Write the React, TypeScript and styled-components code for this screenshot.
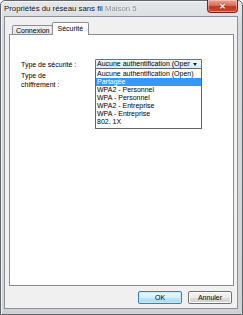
import React from "react";
import styled, { createGlobalStyle } from "styled-components";

const GlobalStyle = createGlobalStyle`
  html, body {
    margin: 0;
    padding: 0;
    background: #ffffff;
  }
  body {
    font-family: "Liberation Sans", Arial, sans-serif;
    font-size: 7px;
    color: #000000;
  }
`;

const Window = styled.div`
  width: 243px;
  height: 315px;
  box-sizing: border-box;
  display: flex;
  flex-direction: column;
  padding: 0 4px 5px 3px;
  border: 1px solid #5f646b;
  border-radius: 5px 5px 0 0;
  background: linear-gradient(180deg, #e4e7ea 0%, #d6dade 8%, #cfd3d8 100%);
  box-shadow: inset 1px 1px 0 #f4f6f8;
`;

const TitleBar = styled.div`
  height: 15px;
  flex-shrink: 0;
  display: flex;
  justify-content: space-between;
  align-items: flex-start;
`;

const Title = styled.div`
  padding: 3px 0 0 0;
  font-size: 7.8px;
  color: #111111;
  white-space: nowrap;
  text-shadow: 0 0 3px #ffffff;
`;

const Blurred = styled.span`
  color: #8a8a8a;
  filter: blur(0.7px);
`;

const CloseButton = styled.div`
  width: 31px;
  height: 13px;
  margin-top: -1px;
  box-sizing: border-box;
  border: 1px solid #7a2416;
  border-top: none;
  border-radius: 0 0 4px 4px;
  background: linear-gradient(180deg, #e9a697 0%, #d7705d 45%, #c0391f 55%, #c94a2c 100%);
  box-shadow: inset 0 0 0 1px rgba(255, 210, 200, 0.5);
  color: #ffffff;
  font-family: "DejaVu Sans", sans-serif;
  font-size: 9px;
  font-weight: bold;
  line-height: 12px;
  text-align: center;
  text-shadow: 0 0 2px #6a1a0c;
`;

const Client = styled.div`
  flex: 1;
  display: flex;
  flex-direction: column;
  padding: 5px 3px 4px 4px;
  border: 1px solid #8b9199;
  background: #f0f0f0;
`;

const TabRow = styled.div`
  display: flex;
  align-items: flex-end;
  padding-left: 3px;
  margin-bottom: -1px;
  position: relative;
  z-index: 1;
`;

const Tab = styled.div<{ $active?: boolean }>`
  box-sizing: border-box;
  height: ${(p) => (p.$active ? "13px" : "10px")};
  padding: ${(p) => (p.$active ? "2px 5px 0 4px" : "1px 3px 0 3px")};
  margin-left: ${(p) => (p.$active ? "-1px" : "0")};
  border: 1px solid #898c95;
  border-bottom: ${(p) => (p.$active ? "none" : "1px solid #898c95")};
  border-radius: 2px 2px 0 0;
  background: ${(p) =>
    p.$active ? "#ffffff" : "linear-gradient(180deg, #f2f2f2 0%, #e3e3e3 100%)"};
  color: #000000;
  white-space: nowrap;
`;

const Panel = styled.div`
  flex: 1;
  position: relative;
  border: 1px solid #898c95;
  background: #ffffff;
  padding: 24px 0 0 11px;
`;

const Form = styled.div`
  display: grid;
  grid-template-columns: 74px 107px;
  row-gap: 1px;
  align-items: start;
`;

const Label = styled.div<{ $wrap?: boolean }>`
  line-height: 9px;
  padding-top: 0.5px;
  max-width: ${(p) => (p.$wrap ? "44px" : "none")};
  white-space: ${(p) => (p.$wrap ? "normal" : "nowrap")};
`;

const SelectWrap = styled.div`
  position: relative;
`;

const Select = styled.div`
  box-sizing: border-box;
  height: 10px;
  border: 1px solid #3c7fb1;
  border-radius: 1px;
  background: linear-gradient(180deg, #eef8fd 0%, #e2f3fc 50%, #d3edfb 100%);
  display: flex;
  align-items: center;
  padding-left: 1px;
  overflow: hidden;
  white-space: nowrap;
  line-height: 8px;
`;

const SelectText = styled.span`
  flex: 1;
  overflow: hidden;
`;

const Arrow = styled.span`
  width: 0;
  height: 0;
  margin: 0 4px 0 3px;
  border-left: 2.5px solid transparent;
  border-right: 2.5px solid transparent;
  border-top: 3px solid #1a1a1a;
`;

const List = styled.div`
  position: absolute;
  left: 0;
  top: 9px;
  width: 107px;
  box-sizing: border-box;
  border: 1px solid #646464;
  background: #ffffff;
  padding: 1px 0 2px 0;
  z-index: 2;
`;

const Option = styled.div<{ $selected?: boolean }>`
  height: 8px;
  line-height: 8px;
  padding-left: 1px;
  white-space: nowrap;
  background: ${(p) => (p.$selected ? "#3399ff" : "transparent")};
  color: ${(p) => (p.$selected ? "#ffffff" : "#000000")};
`;

const ButtonRow = styled.div`
  display: flex;
  justify-content: flex-end;
  gap: 6px;
  padding: 5px 2px 0 0;
`;

const Button = styled.div<{ $default?: boolean }>`
  box-sizing: border-box;
  width: 44px;
  height: 13px;
  border: 1px solid ${(p) => (p.$default ? "#3c7fb1" : "#707070")};
  border-radius: 2px;
  background: ${(p) =>
    p.$default
      ? "linear-gradient(180deg, #eaf6fd 0%, #d9f0fc 50%, #bee6fd 51%, #a7d9f5 100%)"
      : "linear-gradient(180deg, #f2f2f2 0%, #ebebeb 50%, #dddddd 51%, #cfcfcf 100%)"};
  box-shadow: inset 0 0 0 1px ${(p) => (p.$default ? "#c6eafd" : "#fcfcfc")};
  text-align: center;
  line-height: 11px;
`;

const options = [
  "Aucune authentification (Open)",
  "Partagée",
  "WPA2 - Personnel",
  "WPA - Personnel",
  "WPA2 - Entreprise",
  "WPA - Entreprise",
  "802. 1X",
];

export default function App() {
  return (
    <>
      <GlobalStyle />
      <Window>
        <TitleBar>
          <Title>
            Propriétés du réseau sans fil <Blurred>Maison 5</Blurred>
          </Title>
          <CloseButton>×</CloseButton>
        </TitleBar>
        <Client>
          <TabRow>
            <Tab>Connexion</Tab>
            <Tab $active>Sécurité</Tab>
          </TabRow>
          <Panel>
            <Form>
              <Label>Type de sécurité :</Label>
              <SelectWrap>
                <Select>
                  <SelectText>Aucune authentification (Open)</SelectText>
                  <Arrow />
                </Select>
                <List>
                  {options.map((o) => (
                    <Option key={o} $selected={o === "Partagée"}>
                      {o}
                    </Option>
                  ))}
                </List>
              </SelectWrap>
              <Label $wrap>Type de chiffrement :</Label>
            </Form>
          </Panel>
          <ButtonRow>
            <Button $default>OK</Button>
            <Button>Annuler</Button>
          </ButtonRow>
        </Client>
      </Window>
    </>
  );
}
